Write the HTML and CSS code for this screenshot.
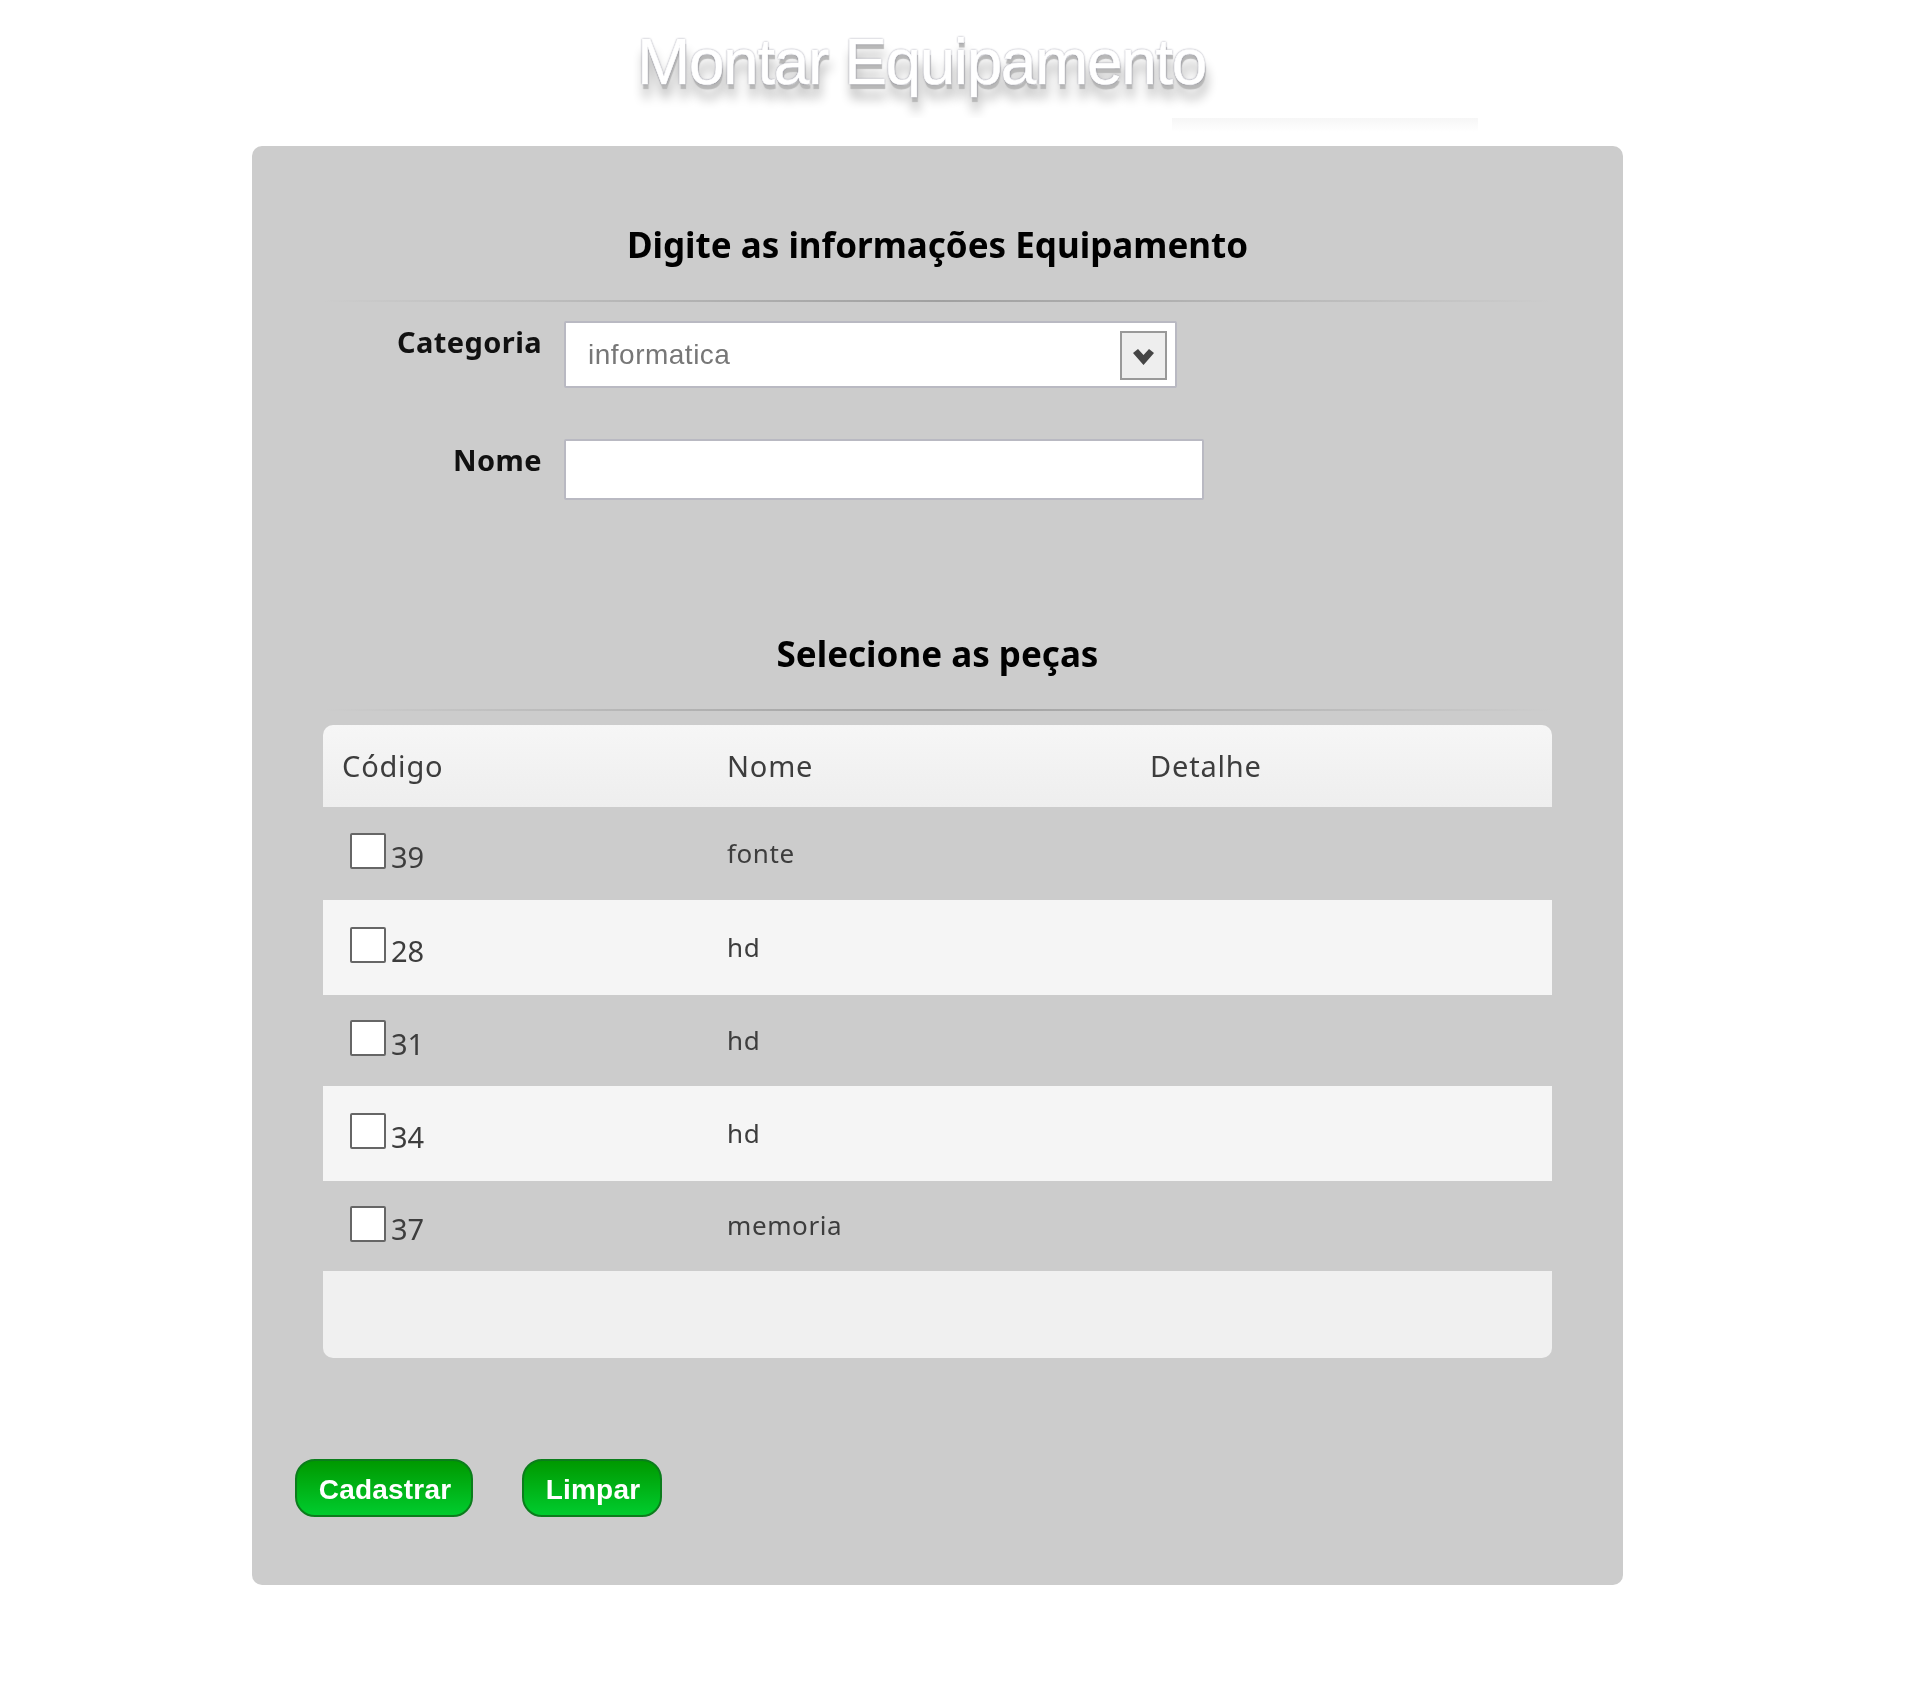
FILE: index.html
```html
<!DOCTYPE html>
<html lang="pt-BR">

<head>
    <meta charset="UTF-8">
    <meta name="viewport" content="width=device-width, initial-scale=1.0">
    <title>Montar Equipamento</title>
    <link rel="stylesheet" href="styles.css">
</head>

<body>
    <h1 class="page-title"><span>Montar Equipamento</span></h1>
    <div class="title-glow"></div>

    <form class="panel">
        <div class="panel-body">
            <h2 class="section-title">Digite as informações Equipamento</h2>

            <div class="field">
                <label class="field-label" for="categoria">Categoria</label>
                <div class="select-wrap">
                    <select id="categoria" class="select-box">
                        <option>informatica</option>
                    </select>
                    <span class="select-arrow">
                        <svg width="21" height="17" viewBox="0 0 21 17">
                            <path d="M0 5 L5 1 L10.5 7 L16 1 L21 5 L10.5 17 Z" fill="#454545"/>
                        </svg>
                    </span>
                </div>
            </div>

            <div class="field field-nome">
                <label class="field-label" for="nome">Nome</label>
                <input type="text" id="nome" class="text-box">
            </div>

            <h2 class="section-title section-pecas">Selecione as peças</h2>

            <table class="pecas">
                <thead>
                    <tr>
                        <th class="col-codigo">Código</th>
                        <th class="col-nome">Nome</th>
                        <th>Detalhe</th>
                    </tr>
                </thead>
                <tbody>
                    <tr class="row-a">
                        <td class="cell-code"><input type="checkbox" class="check"><span>39</span></td>
                        <td>fonte</td>
                        <td></td>
                    </tr>
                    <tr class="row-b">
                        <td class="cell-code"><input type="checkbox" class="check"><span>28</span></td>
                        <td>hd</td>
                        <td></td>
                    </tr>
                    <tr class="row-a">
                        <td class="cell-code"><input type="checkbox" class="check"><span>31</span></td>
                        <td>hd</td>
                        <td></td>
                    </tr>
                    <tr class="row-b">
                        <td class="cell-code"><input type="checkbox" class="check"><span>34</span></td>
                        <td>hd</td>
                        <td></td>
                    </tr>
                    <tr class="row-a">
                        <td class="cell-code"><input type="checkbox" class="check"><span>37</span></td>
                        <td>memoria</td>
                        <td></td>
                    </tr>
                </tbody>
                <tfoot>
                    <tr>
                        <td colspan="3"></td>
                    </tr>
                </tfoot>
            </table>
        </div>

        <div class="actions">
            <button type="button" class="btn btn-cadastrar">Cadastrar</button>
            <button type="button" class="btn">Limpar</button>
        </div>
    </form>
</body>

</html>
```

FILE: styles.css
```css
body {
    margin: 0;
    background: #ffffff;
    font-family: "Noto Sans", sans-serif;
}

.page-title {
    height: 118px;
    margin: 0;
    padding-left: 637px;
    overflow: hidden;
    font-family: "Liberation Sans", sans-serif;
    font-size: 64px;
    font-weight: normal;
    line-height: 124px;
    letter-spacing: -1.4px;
    white-space: nowrap;
    color: #ffffff;
}

.page-title span {
    -webkit-text-stroke: 0.6px #ffffff;
    text-shadow: 0 0 2px #67677c, 1px 5px 1px #b8b8b8, 2px 14px 11px rgba(0, 0, 0, 0.32);
}

.title-glow {
    width: 306px;
    height: 14px;
    margin: 0 0 14px 1172px;
    background: linear-gradient(to bottom, #f6f6f6, #ffffff);
}

.panel {
    width: 1371px;
    height: 1439px;
    box-sizing: border-box;
    margin-left: 252px;
    padding-top: 77px;
    background: #cccccc;
    border-radius: 10px;
    filter: blur(0.4px);
}

.panel-body {
    margin: 0 71px;
}

.section-title {
    position: relative;
    height: 44px;
    margin: 0;
    padding-bottom: 33px;
    font-size: 35px;
    line-height: 44px;
    font-weight: bold;
    text-align: center;
    color: #000000;
}

.section-title::after {
    content: "";
    position: absolute;
    left: 0;
    right: 0;
    bottom: -2px;
    height: 2px;
    background: linear-gradient(to right, rgba(170, 170, 170, 0), #a0a0a0 50%, rgba(170, 170, 170, 0));
}

.section-pecas {
    margin-top: 132px;
}

.field {
    display: flex;
    margin-top: 21px;
}

.field-nome {
    margin-top: 51px;
}

.field-label {
    width: 219px;
    padding-top: 1px;
    font-size: 29px;
    line-height: 40px;
    letter-spacing: 0.4px;
    font-weight: bold;
    text-align: right;
    color: #111111;
}

.select-wrap {
    position: relative;
    width: 613px;
    height: 67px;
    margin-left: 22px;
}

.select-box {
    width: 100%;
    height: 100%;
    padding-left: 22px;
    border: 2px solid #b9b9c2;
    border-radius: 2px;
    background: #ffffff;
    appearance: none;
    font-family: "Liberation Sans", sans-serif;
    font-size: 28px;
    letter-spacing: 0.5px;
    color: #777777;
}

.select-arrow {
    position: absolute;
    top: 10px;
    right: 10px;
    display: flex;
    align-items: center;
    justify-content: center;
    width: 43px;
    height: 43px;
    padding-top: 2px;
    border: 2px solid #999999;
    background: #eeeeee;
}

.select-arrow svg {
    display: block;
}

.text-box {
    width: 640px;
    height: 61px;
    box-sizing: border-box;
    margin-left: 22px;
    border: 2px solid #b9b9c2;
    border-radius: 2px;
    background: #ffffff;
}

.pecas {
    width: 1229px;
    margin-top: 16px;
    border-collapse: separate;
    border-spacing: 0;
    table-layout: fixed;
    font-size: 28px;
    color: #3d3d3d;
}

.pecas th,
.pecas td {
    box-sizing: border-box;
}

.pecas thead th {
    height: 82px;
    padding: 0 0 2px;
    font-size: 29px;
    letter-spacing: 0.8px;
    font-weight: normal;
    text-align: left;
    background: linear-gradient(to bottom, #f6f6f6, #eeeeee);
}

.pecas thead th:first-child {
    border-top-left-radius: 10px;
}

.pecas thead th:last-child {
    border-top-right-radius: 10px;
}

.pecas .col-codigo {
    width: 404px;
    padding-left: 19px;
}

.col-nome {
    width: 423px;
}

.pecas td {
    padding: 0 0 2px;
    font-size: 26px;
    letter-spacing: 0.6px;
}

.row-a td {
    height: 91px;
}

.pecas tbody tr:first-child td {
    height: 93px;
}

.pecas tbody tr:last-child td {
    height: 90px;
}

.row-b td {
    height: 95px;
    background: #f5f5f5;
}

.pecas .cell-code {
    padding-left: 27px;
    font-size: 29px;
    letter-spacing: 0;
}

.cell-code span {
    position: relative;
    top: 5px;
    margin-left: 5px;
}

.check {
    position: relative;
    top: -4px;
    width: 36px;
    height: 36px;
    box-sizing: border-box;
    margin: 0;
    vertical-align: middle;
    appearance: none;
    border: 2px solid #666666;
    border-radius: 2px;
    background: #ffffff;
}

.pecas tfoot td {
    height: 87px;
    background: #f0f0f0;
    border-radius: 0 0 10px 10px;
}

.actions {
    display: flex;
    gap: 49px;
    margin: 101px 0 0 43px;
}

.btn {
    width: 178px;
    height: 58px;
    padding: 3px 0 0 2px;
    border: 2px solid #0b7d1c;
    border-radius: 20px;
    background: linear-gradient(to bottom, #009900, #00cc2e);
    font-family: "Liberation Sans", sans-serif;
    font-size: 28px;
    letter-spacing: 0.2px;
    font-weight: bold;
    color: #ffffff;
}

.btn:last-child {
    width: 140px;
}
```
